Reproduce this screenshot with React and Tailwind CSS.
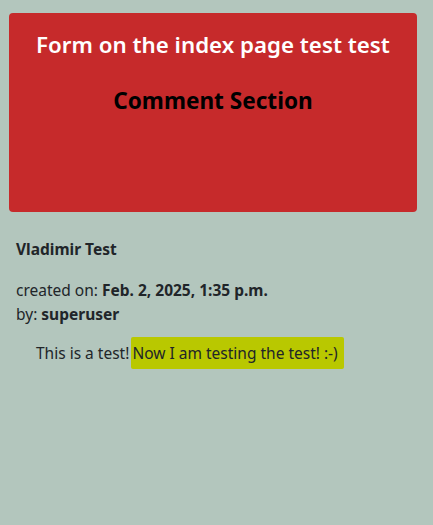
export default function App() {
  return (
    <div className="min-h-[525px] w-full bg-[#b3c6bd] text-[#212529] pt-[13px]" style={{ fontFamily: '"Noto Sans", "Open Sans", sans-serif' }}>
      <div className="ml-[9px] mr-[16px] h-[199px] rounded-[4px] bg-[#c62a2b] pt-[14px] text-center">
        <h1 className="text-[22.3px] leading-[36px] font-semibold text-white">Form on the index page test test</h1>
        <h2 className="mt-[21px] text-[22.6px] leading-[34px] font-bold text-black">Comment Section</h2>
      </div>
      <div className="px-[16px] pt-[25px] text-[15.5px] leading-[24px]">
        <p className="font-bold">Vladimir Test</p>
        <p className="mt-[17px]">created on: <strong>Feb. 2, 2025, 1:35 p.m.</strong></p>
        <p>by: <strong>superuser</strong></p>
        <p className="mt-[15px] pl-[20px]">
          This is a test!{' '}
          <span className="bg-[#b9c800] -ml-[2px] pl-[1px] pr-[6px] py-[5px] rounded-[2px]">Now I am testing the test! :-)</span>
        </p>
      </div>
    </div>
  );
}
